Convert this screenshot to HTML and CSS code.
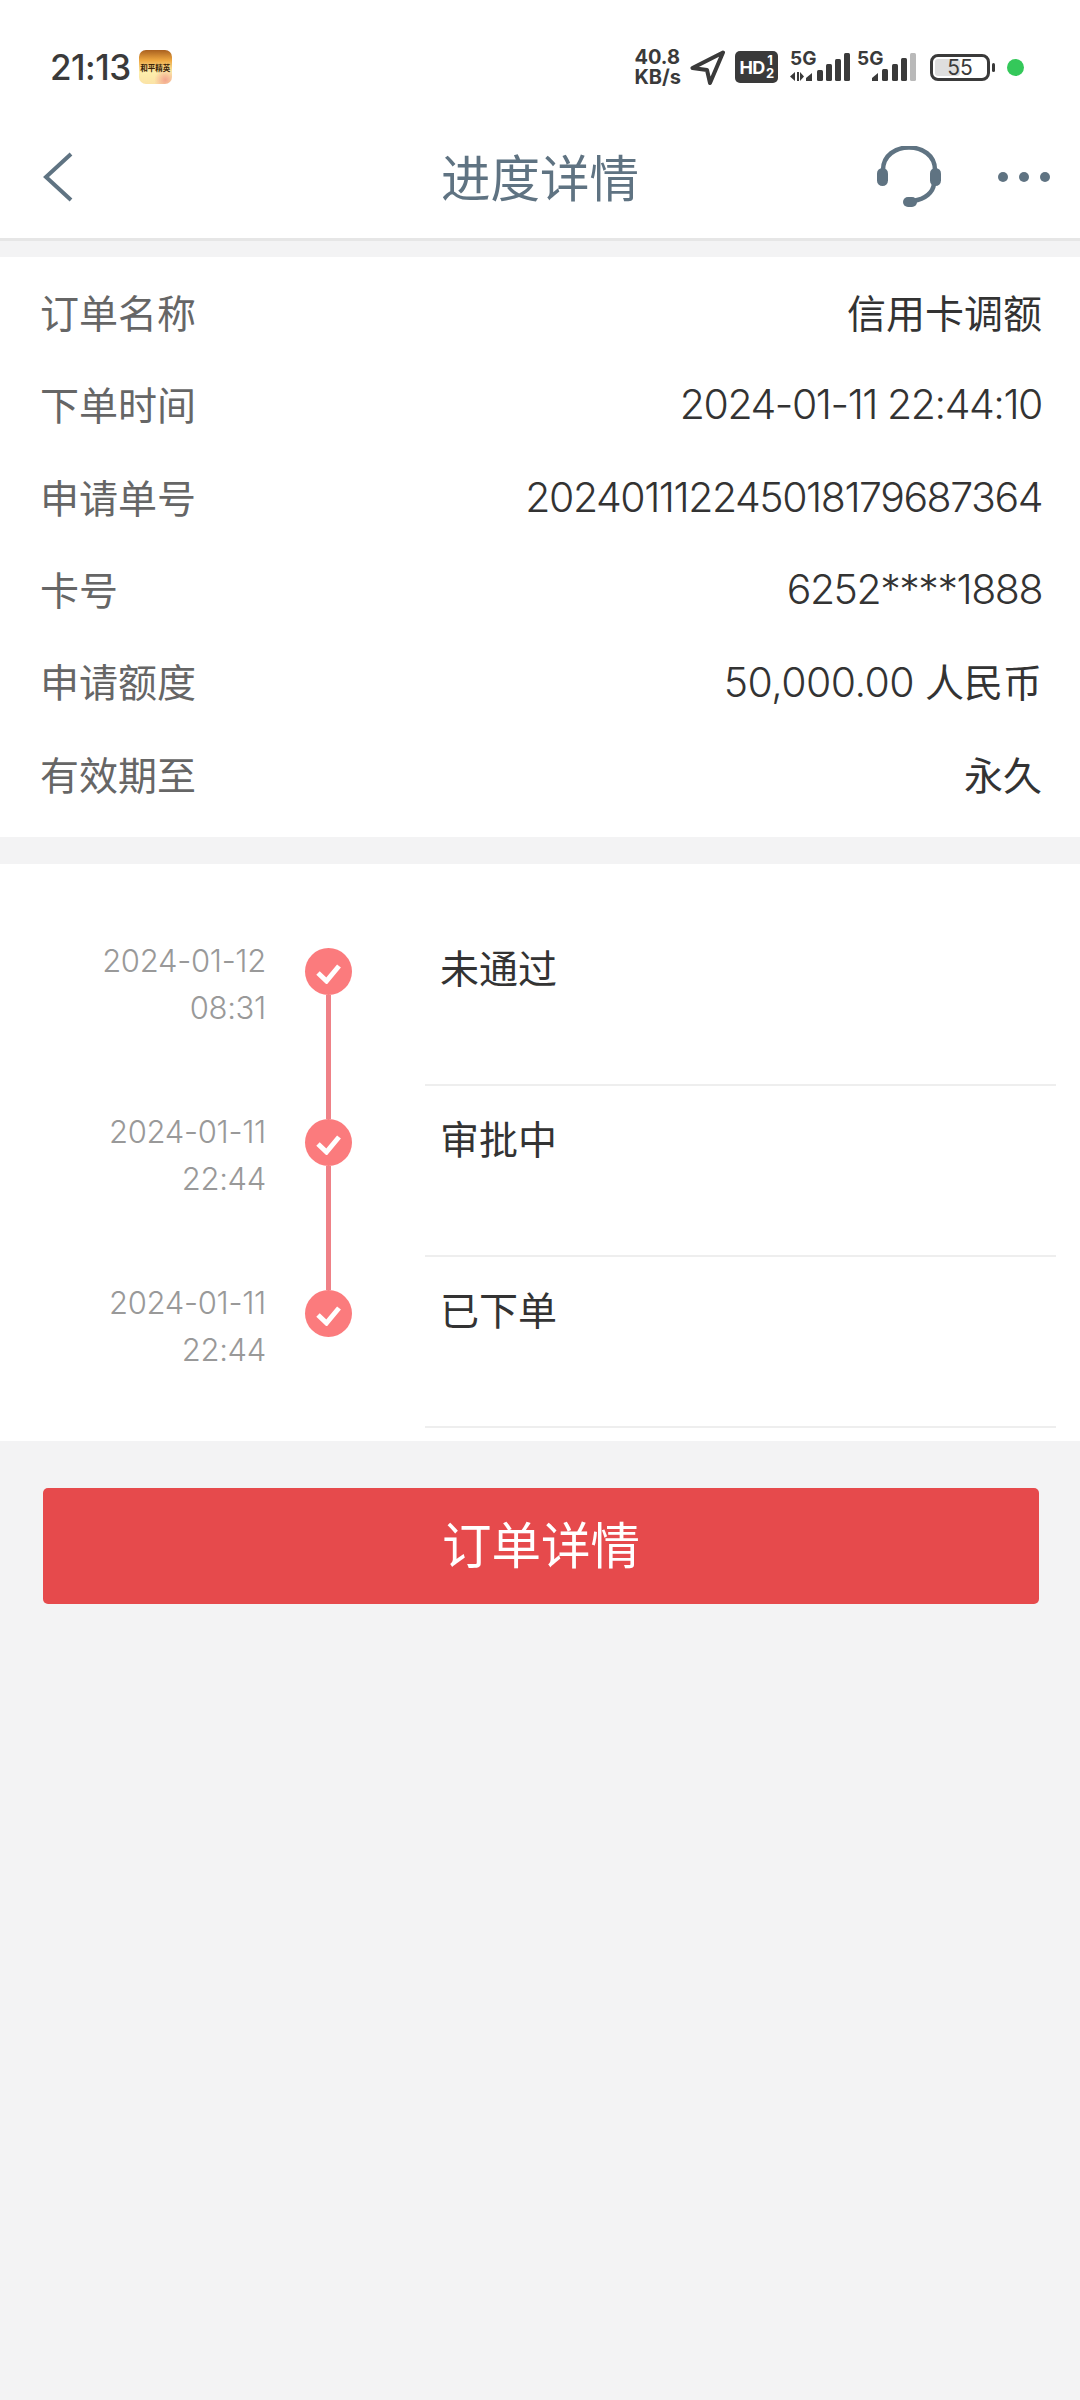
FILE: index.html
```html
<!DOCTYPE html>
<html lang="zh-CN">
<head>
    <meta charset="UTF-8">
    <meta name="viewport" content="width=device-width, initial-scale=1.0">
    <title>进度详情</title>
    <link rel="stylesheet" href="styles.css">
</head>
<body>
    <div class="status-bar">
        <span class="clock">21:13</span>
        <span class="app-icon"><span class="app-icon-text">和平精英</span></span>
        <div class="status-right">
            <span class="speed">40.8<br>KB/s</span>
            <svg class="nav-arrow" width="35" height="35" viewBox="0 0 35 35">
                <path d="M33 2.5 L2.5 18 L17 20 L20 33 Z" fill="none" stroke="#3a3a3a" stroke-width="4" stroke-linejoin="round"/>
            </svg>
            <span class="hd-badge">HD<span class="hd-nums">1<br>2</span></span>
            <div class="signal">
                <span class="net-label">5G</span>
                <svg width="60" height="30" viewBox="0 0 60 30">
                    <path d="M5 21 L0 25.5 L5 30 Z M7 21 L7 30 L9 30 L9 21 Z M10 21 L14 25.5 L10 30 Z" fill="#3a3a3a"/>
                    <path d="M16 27 L22 22 L22 30 L16 30 Z" fill="#3a3a3a"/>
                    <rect x="27" y="19" width="6" height="11" rx="1.5" fill="#3a3a3a"/>
                    <rect x="36" y="13" width="6" height="17" rx="1.5" fill="#3a3a3a"/>
                    <rect x="45" y="8" width="6" height="22" rx="1.5" fill="#3a3a3a"/>
                    <rect x="54" y="2" width="6" height="28" rx="1.5" fill="#3a3a3a"/>
                </svg>
            </div>
            <div class="signal signal-second">
                <span class="net-label">5G</span>
                <svg width="44" height="30" viewBox="0 0 44 30">
                    <path d="M0 27 L6 22 L6 30 L0 30 Z" fill="#3a3a3a"/>
                    <rect x="10" y="18" width="6" height="12" rx="1.5" fill="#3a3a3a"/>
                    <rect x="20" y="13" width="6" height="17" rx="1.5" fill="#3a3a3a"/>
                    <rect x="29" y="7" width="6" height="23" rx="1.5" fill="#3a3a3a"/>
                    <rect x="38" y="2" width="6" height="28" rx="1.5" fill="#b9b9b9"/>
                </svg>
            </div>
            <div class="battery">
                <span class="battery-fill"></span>
                <span class="battery-num">55</span>
            </div>
            <span class="battery-tip"></span>
            <span class="green-dot"></span>
        </div>
    </div>

    <header class="nav-bar">
        <svg class="back-icon" width="30" height="50" viewBox="0 0 30 50">
            <path d="M28 2 L3 25 L28 48" fill="none" stroke="#5f7382" stroke-width="4"/>
        </svg>
        <h1 class="nav-title">进度详情</h1>
        <svg class="headset-icon" width="64" height="61" viewBox="0 0 64 61">
            <path d="M6 24 C6 -6 58 -6 58 24" fill="none" stroke="#5f7382" stroke-width="4.5"/>
            <path d="M57 38 C56 46 49 53 36 55" fill="none" stroke="#5f7382" stroke-width="4.5"/>
            <rect x="0" y="22" width="11" height="18" rx="5.5" fill="#5f7382"/>
            <rect x="53" y="22" width="11" height="18" rx="5.5" fill="#5f7382"/>
            <rect x="26" y="51" width="14" height="10" rx="5" fill="#5f7382"/>
        </svg>
        <div class="more-dots"><i></i><i></i><i></i></div>
    </header>

    <section class="info-card">
        <div class="info-row"><span class="info-label">订单名称</span><span class="info-value">信用卡调额</span></div>
        <div class="info-row"><span class="info-label">下单时间</span><span class="info-value info-num">2024-01-11 22:44:10</span></div>
        <div class="info-row"><span class="info-label">申请单号</span><span class="info-value info-num">202401112245018179687364</span></div>
        <div class="info-row"><span class="info-label">卡号</span><span class="info-value info-num">6252****1888</span></div>
        <div class="info-row"><span class="info-label">申请额度</span><span class="info-value"><span class="info-amount">50,000.00</span> 人民币</span></div>
        <div class="info-row"><span class="info-label">有效期至</span><span class="info-value">永久</span></div>
    </section>

    <section class="timeline">
        <div class="tl-row tl-first">
            <div class="tl-time">2024-01-12<br>08:31</div>
            <div class="tl-node">
                <span class="tl-dot"><svg width="25" height="21" viewBox="0 0 25 21"><path d="M2 10 L10.5 18 L23 3" fill="none" stroke="#fff" stroke-width="5"/></svg></span>
            </div>
            <div class="tl-text">未通过</div>
        </div>
        <div class="tl-row">
            <div class="tl-time">2024-01-11<br>22:44</div>
            <div class="tl-node">
                <span class="tl-dot"><svg width="25" height="21" viewBox="0 0 25 21"><path d="M2 10 L10.5 18 L23 3" fill="none" stroke="#fff" stroke-width="5"/></svg></span>
            </div>
            <div class="tl-text">审批中</div>
        </div>
        <div class="tl-row tl-last">
            <div class="tl-time">2024-01-11<br>22:44</div>
            <div class="tl-node">
                <span class="tl-dot"><svg width="25" height="21" viewBox="0 0 25 21"><path d="M2 10 L10.5 18 L23 3" fill="none" stroke="#fff" stroke-width="5"/></svg></span>
            </div>
            <div class="tl-text">已下单</div>
        </div>
    </section>

    <button class="detail-button">订单详情</button>
</body>
</html>
```

FILE: styles.css
```css
* {
    box-sizing: border-box;
}

body {
    margin: 0;
    width: 1080px;
    min-height: 2400px;
    background-color: #f3f3f4;
    font-family: 'Inter', 'Noto Sans CJK SC', sans-serif;
    color: #333;
}

/* status bar */
.status-bar {
    display: flex;
    align-items: center;
    height: 112px;
    padding: 22px 0 0 50px;
    background-color: #fff;
}

.clock {
    font-size: 35px;
    font-weight: 500;
    letter-spacing: -0.5px;
    color: #3a3a3a;
}

.app-icon {
    display: flex;
    align-items: center;
    justify-content: center;
    width: 33px;
    height: 34px;
    margin-left: 8px;
    border-radius: 7px;
    background: radial-gradient(circle at 80% 88%, #f3a58e 0, rgba(243, 165, 142, 0) 28%),
        linear-gradient(to bottom, #a9601f, #eda63f 30%, #fdeeac 65%, #fbe3a6);
}

.app-icon-text {
    font-size: 7.5px;
    font-weight: 700;
    white-space: nowrap;
    color: #3a2308;
}

.status-right {
    display: flex;
    align-items: center;
    margin-left: auto;
    padding-right: 56px;
}

.speed {
    font-size: 20px;
    font-weight: 700;
    line-height: 20px;
    color: #3a3a3a;
}

.nav-arrow {
    margin-left: 9px;
}

.hd-badge {
    display: flex;
    align-items: center;
    justify-content: center;
    gap: 1px;
    width: 43px;
    height: 32px;
    margin-left: 10px;
    border-radius: 5px;
    background-color: #3a3a3a;
    color: #fff;
    font-size: 18px;
    font-weight: 700;
    letter-spacing: -0.5px;
}

.hd-nums {
    font-size: 13px;
    line-height: 13px;
    text-align: center;
}

.signal {
    position: relative;
    display: flex;
    justify-content: flex-end;
    align-items: flex-end;
    width: 60px;
    height: 34px;
    margin-left: 12px;
    padding-bottom: 3px;
}

.signal-second {
    width: 59px;
    margin-left: 7px;
}

.net-label {
    position: absolute;
    left: 0;
    top: 0;
    font-size: 19px;
    font-weight: 700;
    line-height: 18px;
    color: #3a3a3a;
}

.battery {
    position: relative;
    display: flex;
    align-items: center;
    justify-content: center;
    width: 60px;
    height: 27px;
    margin-left: 14px;
    border: 3px solid #3a3a3a;
    border-radius: 8px;
}

.battery-fill {
    position: absolute;
    left: 2px;
    top: 2px;
    bottom: 2px;
    width: 25px;
    border-radius: 3px;
    background-color: #dedede;
}

.battery-num {
    position: relative;
    font-size: 21px;
    color: #3a3a3a;
}

.battery-tip {
    width: 3px;
    height: 9px;
    margin-left: 2px;
    border-radius: 2px;
    background-color: #3a3a3a;
}

.green-dot {
    width: 17px;
    height: 17px;
    margin-left: 12px;
    border-radius: 50%;
    background-color: #34c85a;
}

/* nav bar */
.nav-bar {
    position: relative;
    display: flex;
    align-items: center;
    height: 129px;
    padding: 3px 30px 0 43px;
    background-color: #fff;
    border-bottom: 3px solid #e6e6e6;
}

.nav-title {
    position: absolute;
    left: 0;
    right: 0;
    margin: 0;
    padding-bottom: 2px;
    text-align: center;
    font-size: 49.5px;
    font-weight: 400;
    color: #5f7382;
}

.headset-icon {
    margin-left: auto;
}

.more-dots {
    display: flex;
    gap: 11px;
    margin-left: 57px;
}

.more-dots i {
    width: 10px;
    height: 10px;
    border-radius: 50%;
    background-color: #5f7382;
}

/* order info */
.info-card {
    margin-top: 16px;
    padding: 8px 38px 18px 40px;
    background-color: #fff;
}

.info-row {
    display: flex;
    justify-content: space-between;
    align-items: center;
    height: 92.3px;
    font-size: 39px;
}

.info-label {
    color: #666;
}

.info-value {
    color: #333;
}

.info-num {
    padding-top: 2px;
    font-size: 41px;
    font-weight: 350;
    letter-spacing: -1.45px;
}

.info-amount {
    font-size: 41px;
    font-weight: 350;
    letter-spacing: -0.55px;
}

/* timeline */
.timeline {
    margin-top: 27px;
    padding: 51px 24px 13px 0;
    background-color: #fff;
}

.tl-row {
    display: grid;
    grid-template-columns: 266px 124px 1fr;
    height: 171px;
}

.tl-time {
    padding-top: 22px;
    text-align: right;
    font-size: 31px;
    font-weight: 350;
    letter-spacing: -0.3px;
    line-height: 47px;
    color: #999;
}

.tl-node {
    display: flex;
    flex-direction: column;
    align-items: center;
}

.tl-node::before,
.tl-node::after {
    content: '';
    width: 5px;
    background-color: #ef8187;
}

.tl-node::before {
    height: 33px;
}

.tl-node::after {
    flex: 1;
}

.tl-first .tl-node::before,
.tl-last .tl-node::after {
    background-color: transparent;
}

.tl-dot {
    display: flex;
    align-items: center;
    justify-content: center;
    flex-shrink: 0;
    width: 47px;
    height: 47px;
    padding-top: 5px;
    border-radius: 50%;
    background-color: #fb7b7d;
}

.tl-text {
    margin-left: 35px;
    padding: 26px 0 0 15px;
    font-size: 39px;
    line-height: 56px;
    color: #333;
    border-bottom: 2px solid #eeeeee;
}

/* button */
.detail-button {
    display: block;
    width: 996px;
    height: 116px;
    margin: 47px 0 0 43px;
    padding: 0 0 6px;
    border: none;
    border-radius: 5px;
    background-color: #e64a4c;
    color: #fff;
    font-family: inherit;
    font-size: 49.5px;
}
```
